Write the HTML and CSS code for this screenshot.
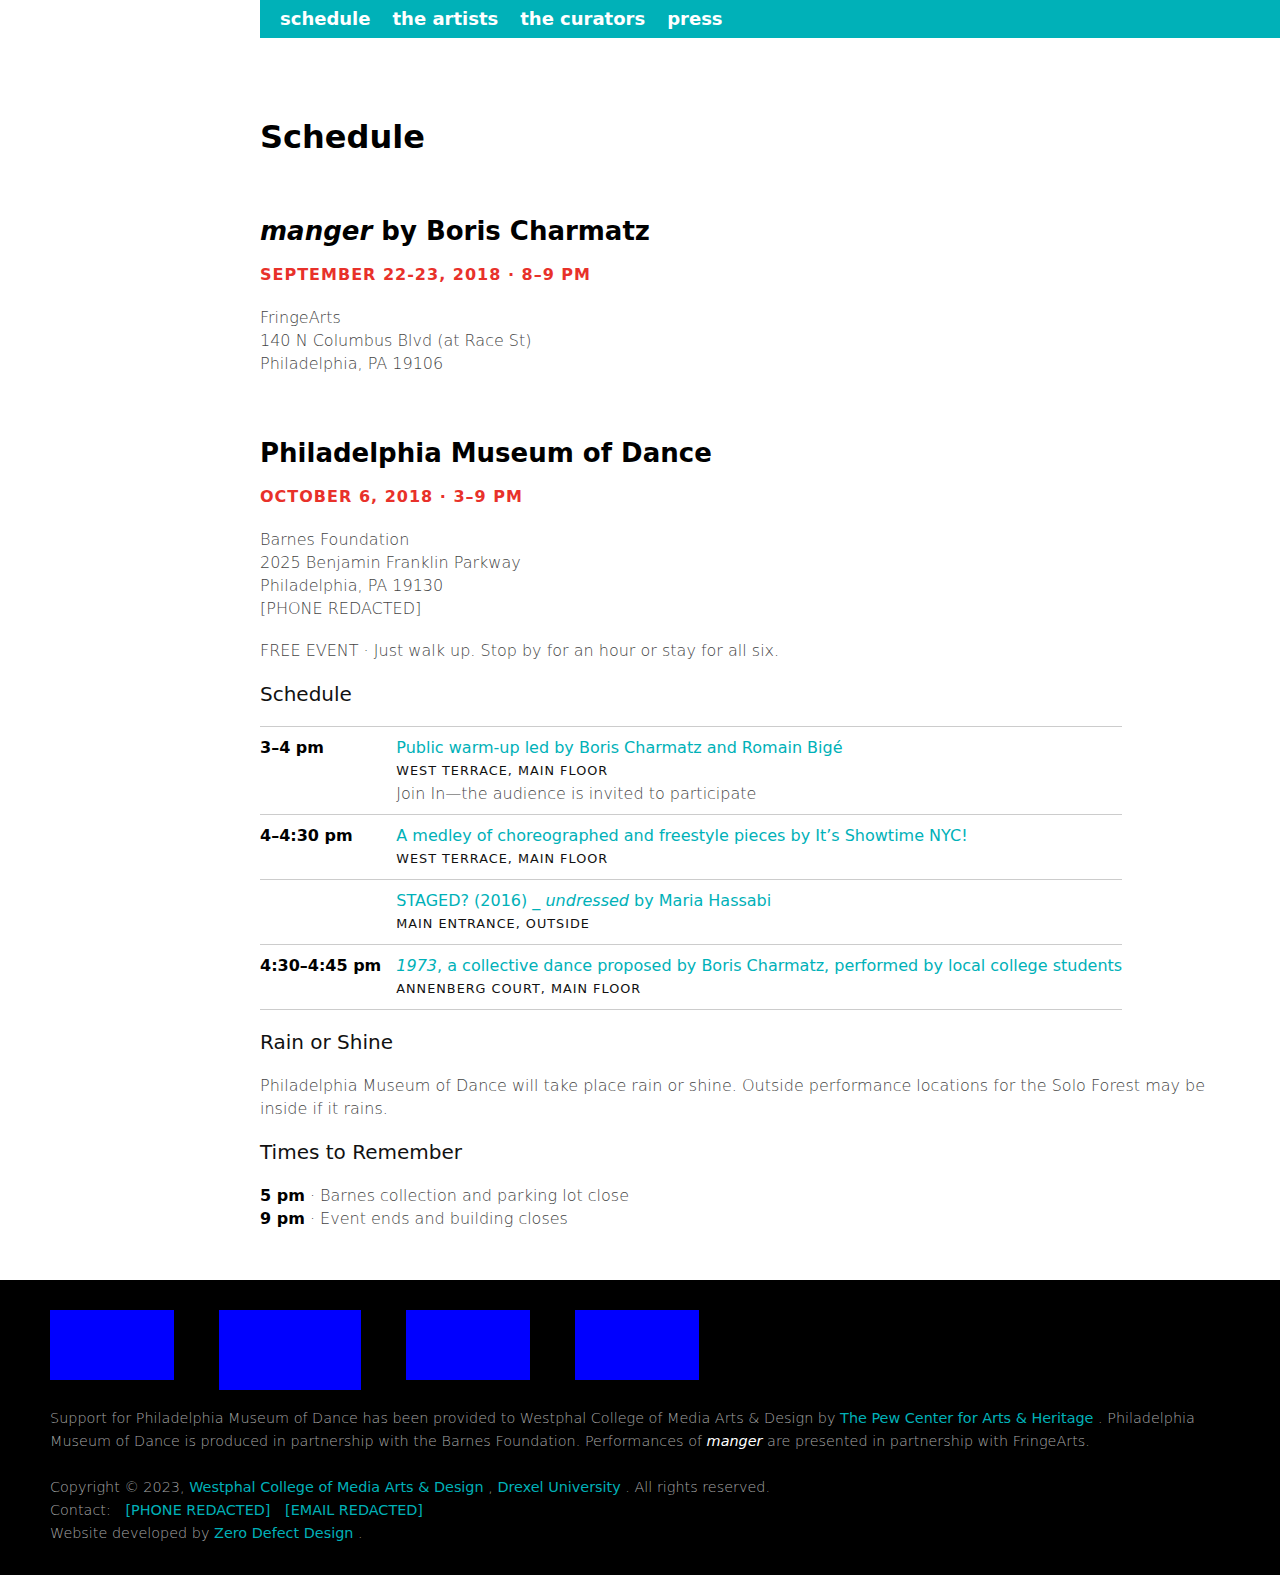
FILE: index.html
```html
<!DOCTYPE html>
<html lang="en">
<head>
<meta charset="utf-8">
<title>Schedule — Philadelphia Museum of Dance</title>
<link rel="stylesheet" href="styles.css">
</head>
<body>
<nav class="topnav">
  <a href="#">schedule</a>
  <a href="#">the artists</a>
  <a href="#">the curators</a>
  <a href="#">press</a>
</nav>

<main class="main">
  <h1 class="page-title">Schedule</h1>

  <section class="event">
    <h2 class="event-title"><em>manger</em> by Boris Charmatz</h2>
    <p class="event-date">September 22-23, 2018 · 8–9 pm</p>
    <p class="text">FringeArts<br>140 N Columbus Blvd (at Race St)<br>Philadelphia, PA 19106</p>
  </section>

  <section class="event">
    <h2 class="event-title">Philadelphia Museum of Dance</h2>
    <p class="event-date">October 6, 2018 · 3–9 pm</p>
    <p class="text address">Barnes Foundation<br>2025 Benjamin Franklin Parkway<br>Philadelphia, PA 19130<br>[PHONE REDACTED]</p>
    <p class="text">FREE EVENT · Just walk up. Stop by for an hour or stay for all six.</p>
    <h3 class="sub">Schedule</h3>
    <table class="sched">
      <tr>
        <td class="time">3–4 pm</td>
        <td class="item">
          <a class="item-title" href="#">Public warm-up led by Boris Charmatz and Romain Bigé</a>
          <div class="loc">West Terrace, Main Floor</div>
          <div class="desc">Join In—the audience is invited to participate</div>
        </td>
      </tr>
      <tr>
        <td class="time">4–4:30 pm</td>
        <td class="item">
          <a class="item-title" href="#">A medley of choreographed and freestyle pieces by It’s Showtime NYC!</a>
          <div class="loc">West Terrace, Main Floor</div>
        </td>
      </tr>
      <tr>
        <td class="time"></td>
        <td class="item">
          <a class="item-title" href="#">STAGED? (2016) _ <em>undressed</em> by Maria Hassabi</a>
          <div class="loc">Main Entrance, Outside</div>
        </td>
      </tr>
      <tr>
        <td class="time">4:30–4:45 pm</td>
        <td class="item">
          <a class="item-title" href="#"><em>1973</em>, a collective dance proposed by Boris Charmatz, performed by local college students</a>
          <div class="loc">Annenberg Court, Main Floor</div>
        </td>
      </tr>
    </table>
    <h3 class="sub">Rain or Shine</h3>
    <p class="text">Philadelphia Museum of Dance will take place rain or shine. Outside performance locations for the Solo Forest may be inside if it rains.</p>
    <h3 class="sub">Times to Remember</h3>
    <p class="text"><strong>5 pm</strong> · Barnes collection and parking lot close<br><strong>9 pm</strong> · Event ends and building closes</p>
  </section>
</main>

<footer class="footer">
  <div class="logos">
    <div class="logo logo-a"></div>
    <div class="logo logo-b"></div>
    <div class="logo logo-a"></div>
    <div class="logo logo-a"></div>
  </div>
  <p class="foot-text">Support for Philadelphia Museum of Dance has been provided to Westphal College of Media Arts &amp; Design by <a href="#">The Pew Center for Arts &amp; Heritage</a> . Philadelphia Museum of Dance is produced in partnership with the Barnes Foundation. Performances of <em>manger</em> are presented in partnership with FringeArts.</p>
  <p class="foot-text">Copyright © 2023, <a href="#">Westphal College of Media Arts &amp; Design</a> , <a href="#">Drexel University</a> . All rights reserved.<br>Contact: <a class="contact" href="#">[PHONE REDACTED]</a> <a class="contact" href="#">[EMAIL REDACTED]</a><br>Website developed by <a href="#">Zero Defect Design</a> .</p>
</footer>
</body>
</html>
```

FILE: styles.css
```css
html, body {
  margin: 0;
  padding: 0;
}
body {
  font-family: "DejaVu Sans", "Liberation Sans", sans-serif;
  color: #444;
  background: #fff;
}
a {
  text-decoration: none;
}

.topnav {
  margin-left: 260px;
  height: 38px;
  box-sizing: border-box;
  padding: 0 0 2px 20px;
  background: #00b1b8;
  display: flex;
  align-items: center;
  gap: 22px;
}
.topnav a {
  color: #fff;
  font-weight: bold;
  font-size: 18px;
}

.main {
  margin-left: 260px;
  max-width: 960px;
  padding: 80px 0 50px;
}
.page-title {
  margin: 0 0 60px;
  font-size: 32px;
  font-weight: bold;
  line-height: normal;
  color: #000;
}
.event {
  display: flex;
  flex-direction: column;
  gap: 20px;
}
.event + .event {
  margin-top: 63px;
}
.event-title {
  margin: 0;
  font-size: 26px;
  font-weight: bold;
  line-height: normal;
  color: #000;
}
.event-date {
  margin: -1px 0 2px;
  font-size: 16px;
  font-weight: bold;
  text-transform: uppercase;
  letter-spacing: 1px;
  color: #e8312a;
  line-height: normal;
}
.text {
  margin: 0;
  font-size: 16px;
  line-height: 23px;
  font-weight: 300;
  color: #444;
}
.text.address {
  margin-bottom: -1px;
}
.text strong {
  font-weight: bold;
  color: #000;
}
.sub {
  margin: 0;
  font-size: 20px;
  font-weight: normal;
  line-height: normal;
  color: #111;
}

.sched {
  border-collapse: collapse;
  align-self: flex-start;
}
.sched tr {
  border-top: 1px solid #ccc;
  border-bottom: 1px solid #ccc;
}
.sched td {
  padding: 9px 0;
  vertical-align: top;
  line-height: 23px;
}
.sched .time {
  padding-right: 15px;
  font-weight: bold;
  font-size: 16px;
  color: #000;
  white-space: nowrap;
}
.item-title {
  display: block;
  color: #00b1b8;
  font-size: 16px;
  white-space: nowrap;
}
.loc {
  padding-top: 1px;
  line-height: 22px;
  font-size: 12.8px;
  text-transform: uppercase;
  letter-spacing: 1px;
  color: #111;
}
.desc {
  font-size: 16px;
  font-weight: 300;
  color: #444;
}

.footer {
  background: #000;
  padding: 30px 50px 30px;
}
.logos {
  display: flex;
  align-items: flex-start;
  gap: 45px;
  margin-bottom: 17px;
}
.logo {
  background: #0000ff;
}
.logo-a {
  width: 124px;
  height: 70px;
}
.logo-b {
  width: 142px;
  height: 80px;
}
.foot-text {
  margin: 0 0 23px;
  font-size: 14.4px;
  line-height: 23px;
  font-weight: 300;
  color: #a6a6a6;
}
.foot-text:last-child {
  margin-bottom: 0;
}
.foot-text a {
  color: #00b1b8;
  font-weight: normal;
}
.foot-text em {
  color: #fff;
  font-weight: normal;
}
.foot-text .contact {
  margin-left: 10px;
}
```
